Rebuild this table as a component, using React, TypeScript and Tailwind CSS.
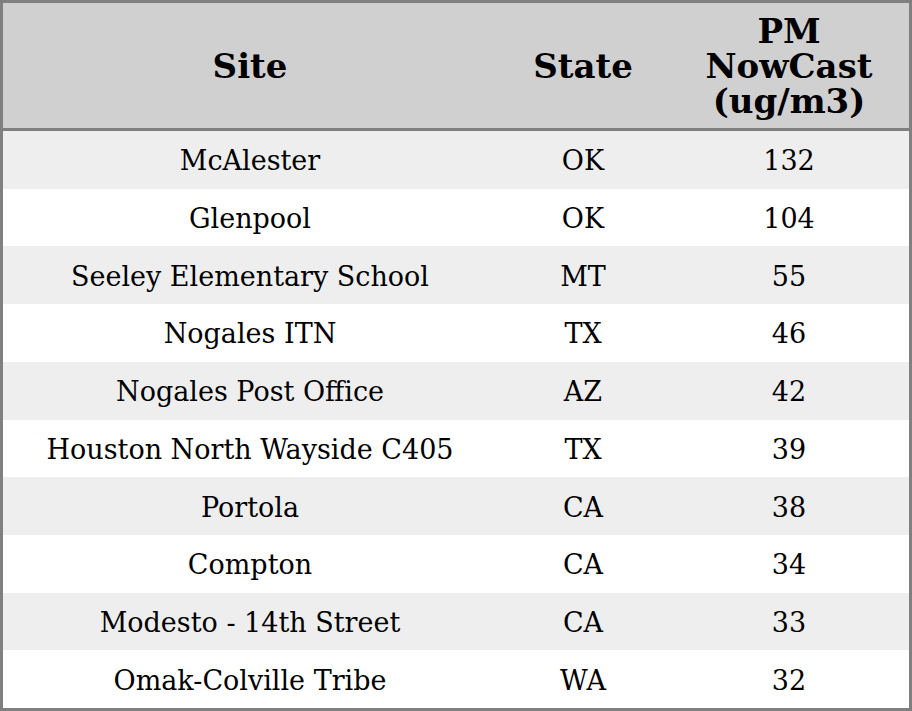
import React from "react";

const rows: [string, string, number][] = [
  ["McAlester", "OK", 132],
  ["Glenpool", "OK", 104],
  ["Seeley Elementary School", "MT", 55],
  ["Nogales ITN", "TX", 46],
  ["Nogales Post Office", "AZ", 42],
  ["Houston North Wayside C405", "TX", 39],
  ["Portola", "CA", 38],
  ["Compton", "CA", 34],
  ["Modesto - 14th Street", "CA", 33],
  ["Omak-Colville Tribe", "WA", 32],
];

export default function App() {
  return (
    <div className="w-[912px] h-[711px] border-[3px] border-[#808080] bg-white flex flex-col font-['DejaVu_Serif',serif] text-black">
      <div className="h-[128px] shrink-0 bg-[#d0d0d0] border-b-[3px] border-[#808080] flex items-center pt-[2px] text-[34px] font-bold leading-[35px] text-center">
        <div className="w-[494px]">Site</div>
        <div className="w-[172px]">State</div>
        <div className="flex-1">
          PM
          <br />
          NowCast
          <br />
          (ug/m3)
        </div>
      </div>
      <div className="flex-1 flex flex-col text-[27px] leading-none">
        {rows.map(([site, state, pm], i) => (
          <div
            key={site}
            className={`flex-1 flex items-center pt-[2px] text-center ${
              i % 2 === 0 ? "bg-[#eeeeee]" : "bg-white"
            }`}
          >
            <div className="w-[494px]">{site}</div>
            <div className="w-[172px]">{state}</div>
            <div className="flex-1">{pm}</div>
          </div>
        ))}
      </div>
    </div>
  );
}
